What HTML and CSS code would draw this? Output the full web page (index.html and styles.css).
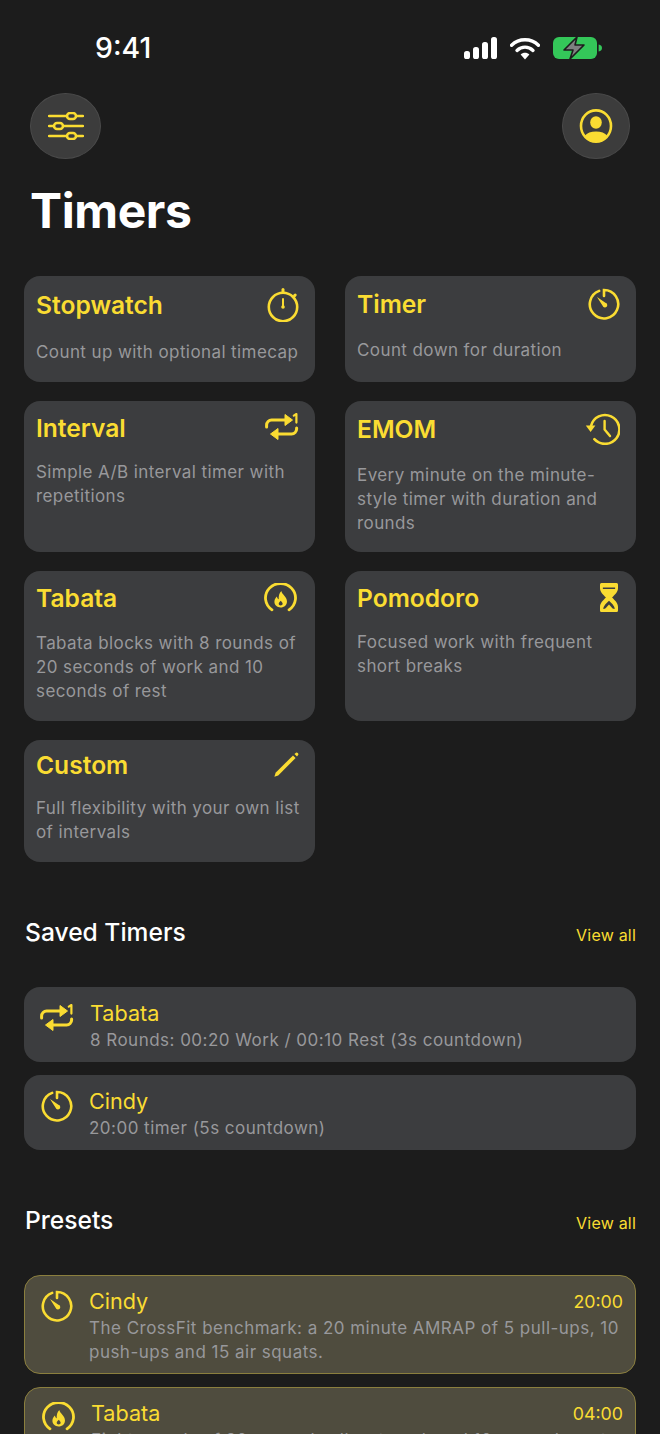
FILE: index.html
```html
<!DOCTYPE html>
<html lang="en">
<head>
<meta charset="utf-8">
<title>Timers</title>
<link rel="stylesheet" href="styles.css">
</head>
<body>
<svg class="defs" width="0" height="0" aria-hidden="true">
  <symbol id="i-timer" viewBox="0 0 32 32">
    <path d="M11.14 2.86A14.2 14.2 0 1 0 16 2V8" fill="none" stroke="currentColor" stroke-width="2.6" stroke-linecap="round"/>
    <path d="M9 9 17.4 14.8A2.4 2.4 0 1 1 14.6 17.8Z" fill="currentColor"/>
  </symbol>
  <symbol id="i-repeat" viewBox="0 0 34 29">
    <path d="M1.600 14V12A5 5 0 0 1 6.600 7H21" fill="none" stroke="currentColor" stroke-width="3" stroke-linecap="round"/>
    <path d="M20 1.500 27.500 7 20 12.500Z" fill="currentColor" stroke="currentColor" stroke-width="1" stroke-linejoin="round"/>
    <path d="M31.600 15V16A5 5 0 0 1 26.600 21H12" fill="none" stroke="currentColor" stroke-width="3" stroke-linecap="round"/>
    <path d="M13 15.500 5.500 21 13 26.500Z" fill="currentColor" stroke="currentColor" stroke-width="1" stroke-linejoin="round"/>
    <path d="M28.800 2.600 31.400 1V9.600" fill="none" stroke="currentColor" stroke-width="2.200" stroke-linecap="round" stroke-linejoin="round"/>
  </symbol>
  <symbol id="i-flame" viewBox="0 0 37 32">
    <path d="M9.400 29.400A16 15.400 0 1 1 27.600 29.400" transform="translate(0 -0.8)" fill="none" stroke="currentColor" stroke-width="3" stroke-linecap="round"/>
    <path d="M19.400 8.400C20 12 25.400 14.400 25.400 19.600C25.400 23.600 22.400 26 18.600 26C14.800 26 12 23.400 12 20C12 17.400 13.400 15.600 14.600 14.400C15 16 15.600 17 16.600 17.400C16.400 14 17 10.600 19.400 8.400Z M18.800 19C17.600 20.200 16.600 21 16.600 22.200C16.600 23.400 17.500 24 18.600 24C19.700 24 20.800 23.400 20.800 22.200C20.800 21 19.600 20.200 18.800 19Z" fill="currentColor" fill-rule="evenodd"/>
  </symbol>
</svg>

<div class="page">
  <div class="status">
    <span class="clock">9:41</span>
    <div class="status-icons">
      <svg class="signal" width="33" height="22" viewBox="0 0 33 22">
        <rect x="0" y="14" width="6" height="8" rx="2.6"/>
        <rect x="9" y="10" width="6" height="12" rx="2.6"/>
        <rect x="18" y="5" width="6" height="17" rx="2.6"/>
        <rect x="27" y="0" width="6" height="22" rx="2.6"/>
      </svg>
      <svg class="wifi" width="30" height="23" viewBox="0 0 30 23">
        <path d="M1.600 8.200C9 1 21 1 28.400 8.200" fill="none" stroke="#fff" stroke-width="3.400" stroke-linecap="round"/>
        <path d="M7 13.400C11.600 9 18.400 9 23 13.400" fill="none" stroke="#fff" stroke-width="3.400" stroke-linecap="round"/>
        <path d="M10.600 17.600C13 15.200 17 15.200 19.400 17.600L15 22.600Z" fill="#fff"/>
      </svg>
      <svg class="battery" width="50" height="24" viewBox="0 0 50 24">
        <rect x="0" y="1" width="44" height="22" rx="6" fill="#34c759"/>
        <path d="M45.600 8.500C48 9 49 10.200 49 12S48 15 45.600 15.500Z" fill="#34c759"/>
        <path d="M24 1 11 14H20L17 23 31 9H22Z" fill="#7f7f80" stroke="#1c1c1c" stroke-width="1.600" stroke-linejoin="round"/>
      </svg>
    </div>
  </div>

  <div class="toolbar">
    <button class="round round-wide" aria-label="Settings">
      <svg width="36" height="28" viewBox="0 0 36 28" fill="none" stroke="currentColor" stroke-width="2.500" stroke-linecap="round">
        <path d="M1 4H19M28 4H35M1 14H6M15 14H35M1 24H19M28 24H35"/>
        <rect x="19" y="1" width="9" height="6" rx="3"/>
        <rect x="6" y="11" width="9" height="6" rx="3"/>
        <rect x="19" y="21" width="9" height="6" rx="3"/>
      </svg>
    </button>
    <button class="round round-narrow" aria-label="Profile">
      <svg width="34" height="34" viewBox="0 0 34 34">
        <ellipse cx="17" cy="17" rx="15" ry="15.600" fill="none" stroke="currentColor" stroke-width="2.600"/>
        <ellipse cx="17" cy="13.500" rx="5.800" ry="6.200" fill="currentColor"/>
        <path d="M5.600 27C8 24 12 22.600 17 22.600S26 24 28.400 27C25.600 30.400 21.600 32.600 17 32.600S8.400 30.400 5.600 27Z" fill="currentColor"/>
      </svg>
    </button>
  </div>

  <h1 class="title">Timers</h1>

  <div class="grid">
    <div class="card">
      <div class="card-head">
        <h2 class="card-title">Stopwatch</h2>
        <svg class="icon" width="32" height="34" viewBox="0 0 32 34" fill="none" stroke="currentColor">
          <circle cx="16" cy="19" r="14.200" stroke-width="2.600"/>
          <path d="M16 4V1.500" stroke-width="3" stroke-linecap="round"/>
          <path d="M27.600 7.600 28.200 7" stroke-width="3" stroke-linecap="round"/>
          <path d="M16 11V19" stroke-width="2" stroke-linecap="round"/>
          <circle cx="16" cy="19" r="1.800" fill="currentColor" stroke="none"/>
        </svg>
      </div>
      <p class="card-desc">Count up with optional timecap</p>
    </div>
    <div class="card">
      <div class="card-head">
        <h2 class="card-title">Timer</h2>
        <svg class="icon" width="32" height="32"><use href="#i-timer"/></svg>
      </div>
      <p class="card-desc">Count down for duration</p>
    </div>
    <div class="card">
      <div class="card-head">
        <h2 class="card-title">Interval</h2>
        <svg class="icon" width="34" height="29"><use href="#i-repeat"/></svg>
      </div>
      <p class="card-desc">Simple A/B interval timer with repetitions</p>
    </div>
    <div class="card card-tight">
      <div class="card-head">
        <h2 class="card-title">EMOM</h2>
        <svg class="icon" width="35" height="32" viewBox="0 0 35 32" fill="none" stroke="currentColor">
          <path d="M6 13A14.400 14.400 0 1 1 9.400 26.200" stroke-width="2.600" stroke-linecap="round"/>
          <path d="M.8 12.600H10.400L5.600 19Z" fill="currentColor" stroke="none"/>
          <path d="M19.600 8V16.400L25 23" stroke-width="2.400" stroke-linecap="round" stroke-linejoin="round"/>
        </svg>
      </div>
      <p class="card-desc">Every minute on the minute-style timer with duration and rounds</p>
    </div>
    <div class="card">
      <div class="card-head">
        <h2 class="card-title">Tabata</h2>
        <svg class="icon" width="37" height="30"><use href="#i-flame"/></svg>
      </div>
      <p class="card-desc">Tabata blocks with 8 rounds of 20 seconds of work and 10 seconds of rest</p>
    </div>
    <div class="card">
      <div class="card-head">
        <h2 class="card-title">Pomodoro</h2>
        <svg class="icon icon-hourglass" width="18" height="29" viewBox="0 0 20 29" preserveAspectRatio="none">
          <path fill-rule="evenodd" fill="currentColor" d="M1.500 0H18.500A1.500 1.500 0 0 1 20 1.500V5C20 9 16.600 11.600 13.400 14.500 16.600 17.400 20 20 20 24V27.500A1.500 1.500 0 0 1 18.500 29H1.500A1.500 1.500 0 0 1 0 27.500V24C0 20 3.400 17.400 6.600 14.500 3.400 11.600 0 9 0 5V1.500A1.500 1.500 0 0 1 1.500 0ZM3.200 4.400V6H16.800V4.400ZM10 17.800C7.400 20 4.200 22.400 3.400 25.800H16.600C15.800 22.400 12.600 20 10 17.800Z"/>
          <path d="M5.500 26 10 21.500 14.500 26Z" fill="currentColor"/>
        </svg>
      </div>
      <p class="card-desc">Focused work with frequent short breaks</p>
    </div>
    <div class="card">
      <div class="card-head">
        <h2 class="card-title">Custom</h2>
        <svg class="icon" width="26" height="26" viewBox="0 0 26 26" fill="currentColor">
          <path d="M20 3.400 22.600 6 5.200 23.400 1.400 24.800 2.600 20.800Z"/>
          <path d="M21.400 2 23 .7A1.300 1.300 0 0 1 24.700 .9L25 1.200A1.300 1.300 0 0 1 25.100 3L24 4.600Z"/>
        </svg>
      </div>
      <p class="card-desc">Full flexibility with your own list of intervals</p>
    </div>
  </div>

  <div class="section-head">
    <h2 class="section-title">Saved Timers</h2>
    <a class="view-all">View all</a>
  </div>
  <div class="list">
    <div class="row">
      <svg class="row-icon row-icon-repeat" width="34" height="29"><use href="#i-repeat"/></svg>
      <div class="row-body">
        <div class="row-title">Tabata</div>
        <div class="row-desc">8 Rounds: 00:20 Work / 00:10 Rest (3s countdown)</div>
      </div>
    </div>
    <div class="row">
      <svg class="row-icon row-icon-timer" width="32" height="32"><use href="#i-timer"/></svg>
      <div class="row-body">
        <div class="row-title">Cindy</div>
        <div class="row-desc">20:00 timer (5s countdown)</div>
      </div>
    </div>
  </div>

  <div class="section-head">
    <h2 class="section-title">Presets</h2>
    <a class="view-all">View all</a>
  </div>
  <div class="list">
    <div class="row row-preset">
      <svg class="row-icon row-icon-timer" width="32" height="32"><use href="#i-timer"/></svg>
      <div class="row-body">
        <div class="row-line">
          <div class="row-title">Cindy</div>
          <div class="row-time">20:00</div>
        </div>
        <div class="row-desc">The CrossFit benchmark: a 20 minute AMRAP of 5 pull-ups, 10 push-ups and 15 air squats.</div>
      </div>
    </div>
    <div class="row row-preset">
      <svg class="row-icon row-icon-flame" width="37" height="30"><use href="#i-flame"/></svg>
      <div class="row-body">
        <div class="row-line">
          <div class="row-title">Tabata</div>
          <div class="row-time">04:00</div>
        </div>
        <div class="row-desc">Eight rounds of 20 seconds all-out work and 10 seconds rest.</div>
      </div>
    </div>
  </div>
</div>
</body>
</html>
```
FILE: styles.css
```css
* { box-sizing: border-box; }
html, body { margin: 0; padding: 0; }
body {
  background: #1c1c1c;
  font-family: Inter, "Liberation Sans", sans-serif;
  color: #fff;
}
.defs { position: absolute; }
.page {
  width: 660px;
  height: 1434px;
  overflow: hidden;
  padding: 0 24px;
}
.status {
  height: 93px;
  margin: 0 -24px;
  padding: 33px 57px 0 95px;
  display: flex;
  justify-content: space-between;
  align-items: flex-start;
}
.clock {
  font-size: 28.4px;
  line-height: 30px;
  font-weight: 500;
}
.status-icons {
  display: flex;
  align-items: center;
  gap: 13px;
  padding-top: 3px;
}
.signal { fill: #fff; }
.toolbar {
  display: flex;
  justify-content: space-between;
  padding: 0 6px;
}
.round {
  height: 66px;
  border-radius: 50%;
  border: 1px solid #4a4a4a;
  background: #3c3c3c;
  color: #fadc32;
  padding: 0;
  display: flex;
  align-items: center;
  justify-content: center;
}
.round-wide { width: 71px; }
.round-narrow { width: 68px; }
.title {
  margin: 23px 0 36px 6px;
  font-size: 48px;
  line-height: 58px;
  font-weight: 700;
  letter-spacing: -0.4px;
}
.grid {
  display: grid;
  grid-template-columns: 291px 291px;
  column-gap: 30px;
  row-gap: 19px;
  align-items: stretch;
}
.card {
  background: #3c3d3f;
  border-radius: 16px;
  padding: 12px 13px 18px 12px;
}
.card-tight { padding-bottom: 17px; }
.card-head {
  display: flex;
  justify-content: space-between;
  align-items: center;
  margin-bottom: 18px;
  color: #fadc32;
}
.card-title {
  margin: 0;
  font-size: 24.6px;
  line-height: 26px;
  font-weight: 600;
  color: #fadc32;
}
.icon { display: block; flex: none; margin-right: 3px; }
.icon-hourglass { margin-right: 5px; }
.card-desc {
  margin: 0;
  font-size: 17px;
  line-height: 24px;
  color: #98989b;
  letter-spacing: 0.41px;
}
.section-head {
  display: flex;
  justify-content: space-between;
  align-items: flex-end;
  margin: 55px 0 40px;
}
.section-title {
  margin: 0 0 0 1px;
  font-size: 24.6px;
  line-height: 30px;
  font-weight: 500;
}
.view-all {
  font-size: 16px;
  line-height: 22px;
  padding-bottom: 1px;
  letter-spacing: 0.2px;
  color: #fadc32;
}
.list {
  display: flex;
  flex-direction: column;
  gap: 13px;
}
.row {
  background: #3c3d3f;
  border-radius: 16px;
  padding: 12px 13px 10px 16px;
  display: flex;
  gap: 15px;
  color: #fadc32;
}
.row-icon { flex: none; display: block; }
.row-icon-repeat { margin-top: 5px; margin-right: 1px; }
.row-icon-timer { margin: 3px 1px 0; }
.row-icon-flame { margin-top: 3px; margin-right: -1px; }
.row-body { flex: 1; min-width: 0; }
.row-title {
  font-size: 21.6px;
  line-height: 29px;
  color: #fadc32;
}
.row-desc {
  font-size: 17px;
  line-height: 24px;
  color: #98989b;
  letter-spacing: 0.48px;
}
.row-line {
  display: flex;
  justify-content: space-between;
  align-items: center;
}
.row-time {
  font-size: 17.8px;
  color: #fadc32;
}
.row-preset {
  background: #4f4c3e;
  border: 1px solid #8b7f3e;
  padding: 11px 12px 9px 15px;
}
```
